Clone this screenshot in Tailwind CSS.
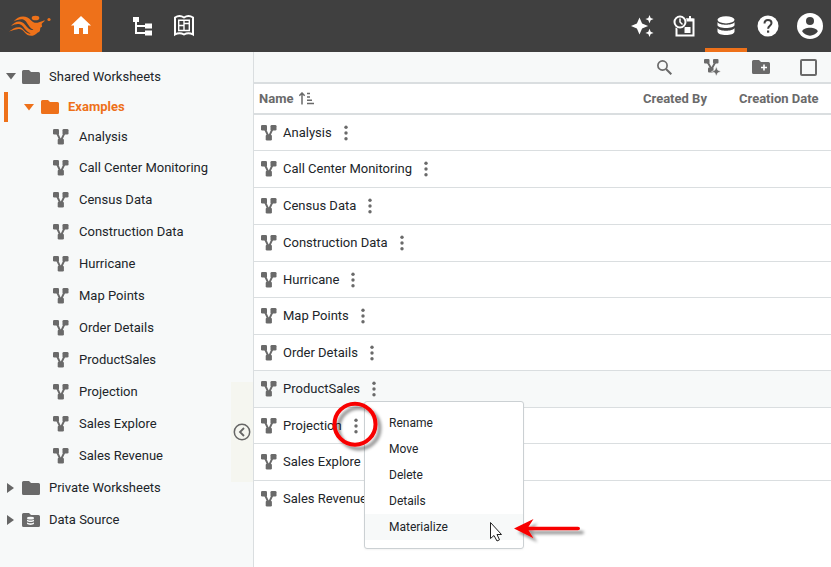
<!DOCTYPE html>
<html lang="en">
<head>
<meta charset="utf-8">
<meta name="viewport" content="width=device-width, initial-scale=1">
<title>Worksheets</title>
<script src="https://cdn.jsdelivr.net/npm/@tailwindcss/browser@4"></script>
</head>
<body class="relative flex h-screen flex-col overflow-hidden bg-white font-[Roboto,sans-serif] text-[13px] text-[#212529]">

<svg class="hidden" aria-hidden="true">
  <symbol id="sheet" viewBox="0 0 16 16">
    <path d="M4 4 7.500 11.500M11.500 4 8 11.500" stroke="currentColor" stroke-width="1.900" fill="none"/>
    <rect x="0" y="0" width="6" height="5.500" rx="1.300" fill="currentColor"/>
    <rect x="9.500" y="0" width="6" height="5.500" rx="1.300" fill="currentColor"/>
    <rect x="4.700" y="9.800" width="6.200" height="5.700" rx="1.300" fill="currentColor"/>
  </symbol>
  <symbol id="folder" viewBox="0 0 18 14">
    <path d="M1.500 0H7l2 2h7.500Q18 2 18 3.500v9q0 1.500-1.500 1.500h-15Q0 14 0 12.500v-11Q0 0 1.500 0z" fill="currentColor"/>
  </symbol>
  <symbol id="dots" viewBox="0 0 4 16">
    <circle cx="2" cy="2.200" r="1.700" fill="currentColor"/><circle cx="2" cy="8" r="1.700" fill="currentColor"/><circle cx="2" cy="13.800" r="1.700" fill="currentColor"/>
  </symbol>
</svg>

<header class="flex h-[52px] shrink-0 items-stretch justify-between bg-[#404040] text-white">
  <nav class="flex items-stretch" aria-label="Main">
    <a href="#" aria-label="Home page" class="flex w-[60px] items-center justify-center text-[#ee7119]">
      <svg width="42" height="22" viewBox="0 0 42 22" fill="currentColor">
        <path d="M4.500 6.500C8 2 14 0 18.500 2.500c3 1.700 4 4 6.500 5 2 .8 6.500-.3 10.500-2.300.5.500 0 1.200-1 1.800-1.300 1-1.800 1.300-1.800 2.500 0 .8.700 1.500.3 2.300-.4.700-1.500.4-1.700 1.200-.4 1.500.2 3.500-1.800 4.300-1.500.6-2.600 2.200-4.500 3-3.500 1.300-7 .2-9.500-3-2-2.500-3.500-3.500-6-3.300-3.500.2-6 1.800-9.500 2.500 3.500-2.500 7-5 11-4.200 3.500.8 5 5.500 9 6.300.8.100 1.300-.1 1.500-.5-3.500-.8-5.500-4.300-8-7.100-3-3.200-7-2.200-11.500 0 3-3.500 7.500-5.700 11.500-3.500 3.500 2 5 6.500 9 7.500.7.200 1.500.1 1.800-.5-3.500-1-5-5-7.300-8C13.800 2.800 9.500 4.500 4.500 6.500z"/>
        <ellipse cx="26.500" cy="3" rx="3.800" ry="2.300"/><circle cx="40" cy="4.500" r="1.600"/>
      </svg>
    </a>
    <a href="#" aria-label="Home" class="flex w-[42px] items-center justify-center bg-[#ee711a]">
      <svg width="20" height="20" viewBox="0 0 20 20" fill="currentColor"><path d="M10 0 20 9.500h-3V18h-5v-6H8v6H3V9.500H0z"/></svg>
    </a>
    <a href="#" aria-label="Repository" class="ml-[19px] flex w-[42px] items-center justify-center">
      <svg width="19" height="19" viewBox="0 0 19 19" fill="currentColor"><path d="M0 0h6v5H4v3h8V6.500h7v5h-7V10H4v5h8v-1.500h7v5h-7V17H2V5H0z"/></svg>
    </a>
    <a href="#" aria-label="Portal" class="flex w-[42px] items-center justify-center">
      <svg width="22" height="23" viewBox="0 0 22 23" fill="none" stroke="currentColor"><path stroke-width="2" d="M2 2.500Q6.500-.3 11 2.500 15.500-.3 20 2.500V19.500Q15.500 17 11 19.500 6.500 17 2 19.500z"/><path stroke-width="1.400" d="M5.700 5.200h5.300v5.300h-5.300zM11 5.200h5.300v3.300h-5.300zM5.700 10.500h5.300v5h-5.300zM11 8.500h5.300v7h-5.300z"/></svg>
    </a>
  </nav>
  <nav class="flex items-stretch" aria-label="Tools">
    <a href="#" aria-label="Assistant" class="flex w-[42px] items-center justify-center">
      <svg width="23" height="22" viewBox="0 0 23 22" fill="currentColor"><path d="m8.500 2.500 2.600 6 6 2.500-6 2.600-2.600 6-2.600-6-6-2.600 6-2.500zM18.500 0l1.200 2.900 2.900 1.200-2.900 1.200-1.200 2.900-1.200-2.900-2.900-1.200 2.900-1.200zM18.500 13.800l1.200 2.900 2.900 1.200-2.900 1.200-1.200 2.900-1.200-2.900-2.900-1.200 2.900-1.200z"/></svg>
    </a>
    <a href="#" aria-label="Schedule" class="flex w-[42px] items-center justify-center">
      <svg width="22" height="22" viewBox="0 0 22 22" fill="none" stroke="currentColor" stroke-width="2"><path d="M3.500 12.500V20.500h17V4.500H13"/><path stroke-width="3" d="M12.500 5h8"/><path d="M17 1v3"/><rect x="11.500" y="12" width="6" height="6" fill="currentColor" stroke="none"/><circle cx="7" cy="7" r="7" fill="#404040" stroke="none"/><circle cx="7" cy="7" r="5.500"/><path stroke-width="1.500" d="M7 3.500V7l2.500 2.500"/></svg>
    </a>
    <a href="#" aria-label="Data" class="flex w-[42px] items-center justify-center border-b-4 border-[#ee711a] pt-1">
      <svg width="18" height="20" viewBox="0 0 18 20" fill="currentColor"><ellipse cx="9" cy="3.800" rx="8.500" ry="3.600"/><path d="M.5 6c2 3.700 15 3.700 17 0v3c0 4-17 4-17 0zM.5 12c2 3.700 15 3.700 17 0v3.500c0 4.700-17 4.700-17 0z"/></svg>
    </a>
    <a href="#" aria-label="Help" class="flex w-[42px] items-center justify-center">
      <svg width="22" height="22" viewBox="0 0 22 22"><circle cx="11" cy="11" r="10.500" fill="currentColor"/><path d="M7.500 8.500c0-5 7-4.500 7-.5 0 2.700-3.400 2.800-3.400 5.800" fill="none" stroke="#404040" stroke-width="2"/><rect x="10" y="15.500" width="2.200" height="2.200" fill="#404040"/></svg>
    </a>
    <a href="#" aria-label="Account" class="flex w-[42px] items-center justify-center">
      <svg width="26" height="26" viewBox="0 0 26 26"><circle cx="13" cy="13" r="13" fill="currentColor"/><circle cx="13" cy="8" r="4" fill="#404040"/><path d="M5.200 18.500c1-5 14.600-5 15.600 0-3.800 5.500-11.800 5.500-15.600 0z" fill="#404040"/></svg>
    </a>
  </nav>
</header>

<div class="flex min-h-0 flex-1">
  <aside class="relative w-[254px] shrink-0 border-r border-[#dadee0] bg-[#f7f9f9] pt-[9px]">
    <ul id="tree">
      <li class="flex h-[31px] items-center pl-[6px]"><button aria-label="Collapse" class="mr-[6px] w-[10px] text-[#666]"><svg width="10" height="7" viewBox="0 0 10 7"><path d="M0 0h10L5 6.500z" fill="currentColor"/></svg></button><svg class="mr-[9px] text-[#6a6a6a]" width="18" height="14"><use href="#folder"/></svg><a href="#">Shared Worksheets</a></li>
      <li class="ml-1 flex h-[30px] items-center border-l-4 border-[#ee711a] pl-4 font-bold text-[#ee711a]"><button aria-label="Collapse" class="mr-[7px] w-[10px]"><svg width="10" height="7" viewBox="0 0 10 7"><path d="M0 0h10L5 6.500z" fill="currentColor"/></svg></button><svg class="mr-[9px]" width="18" height="14"><use href="#folder"/></svg><a href="#">Examples</a></li>
      <li class="flex h-8 items-center pl-[7px]"><button aria-label="Expand" class="mr-[7px] w-[8px] text-[#666]"><svg width="7" height="10" viewBox="0 0 7 10"><path d="M0 0v10l7-5z" fill="currentColor"/></svg></button><svg class="mr-[9px] text-[#6a6a6a]" width="18" height="14"><use href="#folder"/></svg><a href="#">Private Worksheets</a></li>
      <li class="flex h-8 items-center pl-[7px]"><button aria-label="Expand" class="mr-[7px] w-[8px] text-[#666]"><svg width="7" height="10" viewBox="0 0 7 10"><path d="M0 0v10l7-5z" fill="currentColor"/></svg></button><svg class="mr-[9px] text-[#6a6a6a]" width="18" height="14"><use href="#folder"/><g fill="#f7f9f9"><ellipse cx="8.500" cy="5.200" rx="3.500" ry="1.400"/><path d="M5 6.500c1 1.300 6 1.300 7 0v1.500c-1 1.300-6 1.300-7 0zM5 9.300c1 1.300 6 1.300 7 0v1.500c-1 1.500-6 1.500-7 0z"/></g></svg><a href="#">Data Source</a></li>
    </ul>
    <button aria-label="Hide tree" class="absolute right-0 top-[330px] flex h-[100px] w-[22px] items-center justify-center bg-[#f5f6f0] text-[#666]">
      <svg width="18" height="18" viewBox="0 0 18 18" fill="none" stroke="currentColor" stroke-width="1.500"><circle cx="9" cy="9" r="7.700"/><path stroke-width="1.800" d="M11 5 7 9l4 4"/></svg>
    </button>
  </aside>

  <main class="min-w-0 flex-1">
    <div class="flex h-8 items-center justify-end border-b-2 border-[#dadee0] bg-[#f7f9f9] pr-[14px] text-[#6a6a6a]">
      <button aria-label="Search" class="mr-8"><svg width="15" height="15" viewBox="0 0 15 15" fill="none" stroke="currentColor"><circle cx="5.500" cy="5.500" r="4.600" stroke-width="1.700"/><path stroke-width="2" d="m9 9 5.300 5.300"/></svg></button>
      <button aria-label="New worksheet" class="mr-[31px]"><svg width="17" height="17" viewBox="0 0 17 17" fill="currentColor"><path d="M3.500 3l4 7M11.500 3l-4 7" fill="none" stroke="currentColor" stroke-width="1.900"/><rect width="5.500" height="4.500" rx="1"/><rect x="9" width="5.500" height="4.500" rx="1"/><rect x="4" y="8.500" width="5.500" height="5" rx="1"/><path d="m12.300 7.500 1.400 3.600L17 12.500l-3.300 1.400-1.400 3.300-1.400-3.300L7.600 12.500l3.300-1.400z" stroke="#f7f9f9" stroke-width=".6"/></svg></button>
      <button aria-label="New folder" class="mr-[30px]"><svg width="18" height="14"><use href="#folder"/><path d="M12 4.500v6M9 7.500h6" stroke="#fff" stroke-width="1.600"/></svg></button>
      <input type="checkbox" aria-label="Select all" class="h-[17px] w-[17px] appearance-none rounded-[2px] border-2 border-[#6a6a6a]">
    </div>
    <table class="w-full table-fixed border-separate border-spacing-0 text-left">
      <thead class="text-[#6a6a6a]">
        <tr class="h-[31px]">
          <th class="border-b-2 border-[#dadee0] pl-[5px] font-bold"><span class="flex items-center gap-[6px]">Name <svg width="15" height="13" viewBox="0 0 15 13" fill="none" stroke="currentColor" stroke-width="1.500"><path d="M3 12.500V1M.3 3.800 3 1l2.700 2.800M8 1.500h3M8 5h3M8 8.200h5M8 11.500h7"/></svg></span></th>
          <th class="w-24 border-b-2 border-[#dadee0] font-bold">Created By</th>
          <th class="w-[92px] border-b-2 border-[#dadee0] font-bold">Creation Date</th>
        </tr>
      </thead>
      <tbody id="rows"></tbody>
    </table>
  </main>
</div>

<div role="menu" class="absolute left-[364px] top-[401px] w-40 rounded-[3px] border border-[#cbd0d3] bg-white py-2 text-[12px] shadow-xs">
  <button role="menuitem" class="flex h-[26px] w-full items-center px-6">Rename</button>
  <button role="menuitem" class="flex h-[26px] w-full items-center px-6">Move</button>
  <button role="menuitem" class="flex h-[26px] w-full items-center px-6">Delete</button>
  <button role="menuitem" class="flex h-[26px] w-full items-center px-6">Details</button>
  <button role="menuitem" class="flex h-[26px] w-full items-center bg-[#f7f9f9] px-6">Materialize</button>
</div>

<svg class="pointer-events-none absolute left-[325px] top-[395px]" width="270" height="165" viewBox="325 395 270 165" aria-hidden="true">
  <defs><filter id="soft" x="-30%" y="-50%" width="170%" height="220%"><feDropShadow dx="4" dy="4" stdDeviation="1.500" flood-color="#000" flood-opacity=".4"/></filter></defs>
  <circle cx="355" cy="424.200" r="20.500" fill="none" stroke="#f80000" stroke-width="4" filter="url(#soft)"/>
  <path d="m514 528.500 19.500-9.500-5 7.700H578q2 0 2 1.800t-2 1.800h-49.500l5 8z" fill="#f80000" filter="url(#soft)"/>
  <path d="M490.500 522.500v16l3.500-3 3 5.500 2.500-1.200-2.500-5.300h4.500z" fill="#fff" stroke="#222" stroke-width="1"/>
</svg>

<script>
  const sheets = ["Analysis", "Call Center Monitoring", "Census Data", "Construction Data", "Hurricane", "Map Points", "Order Details", "ProductSales", "Projection", "Sales Explore", "Sales Revenue"];
  document.querySelector("#tree li:nth-child(2)").insertAdjacentHTML("afterend", sheets.map(name =>
    `<li class="flex h-8 items-center pl-[53px] nth-3:h-[30px]"><svg class="mr-[10px] text-[#6a6a6a]" width="16" height="16"><use href="#sheet"/></svg><a href="#">${name}</a></li>`).join(""));
  document.getElementById("rows").innerHTML = sheets.map(name =>
    `<tr class="h-9 even:h-[37px] nth-3:h-[37px] nth-8:bg-[#f7f9f9] [&:last-child>td]:border-b-0">
      <td class="border-b border-[#dadee0] pl-[7px]"><span class="flex items-center"><svg class="mr-[6px] text-[#6a6a6a]" width="16" height="16"><use href="#sheet"/></svg><a href="#">${name}</a><button aria-label="${name} options" class="ml-3 text-[#6a6a6a]"><svg width="4" height="16"><use href="#dots"/></svg></button></span></td>
      <td class="border-b border-[#dadee0]"></td><td class="border-b border-[#dadee0]"></td></tr>`).join("");
</script>
</body>
</html>
